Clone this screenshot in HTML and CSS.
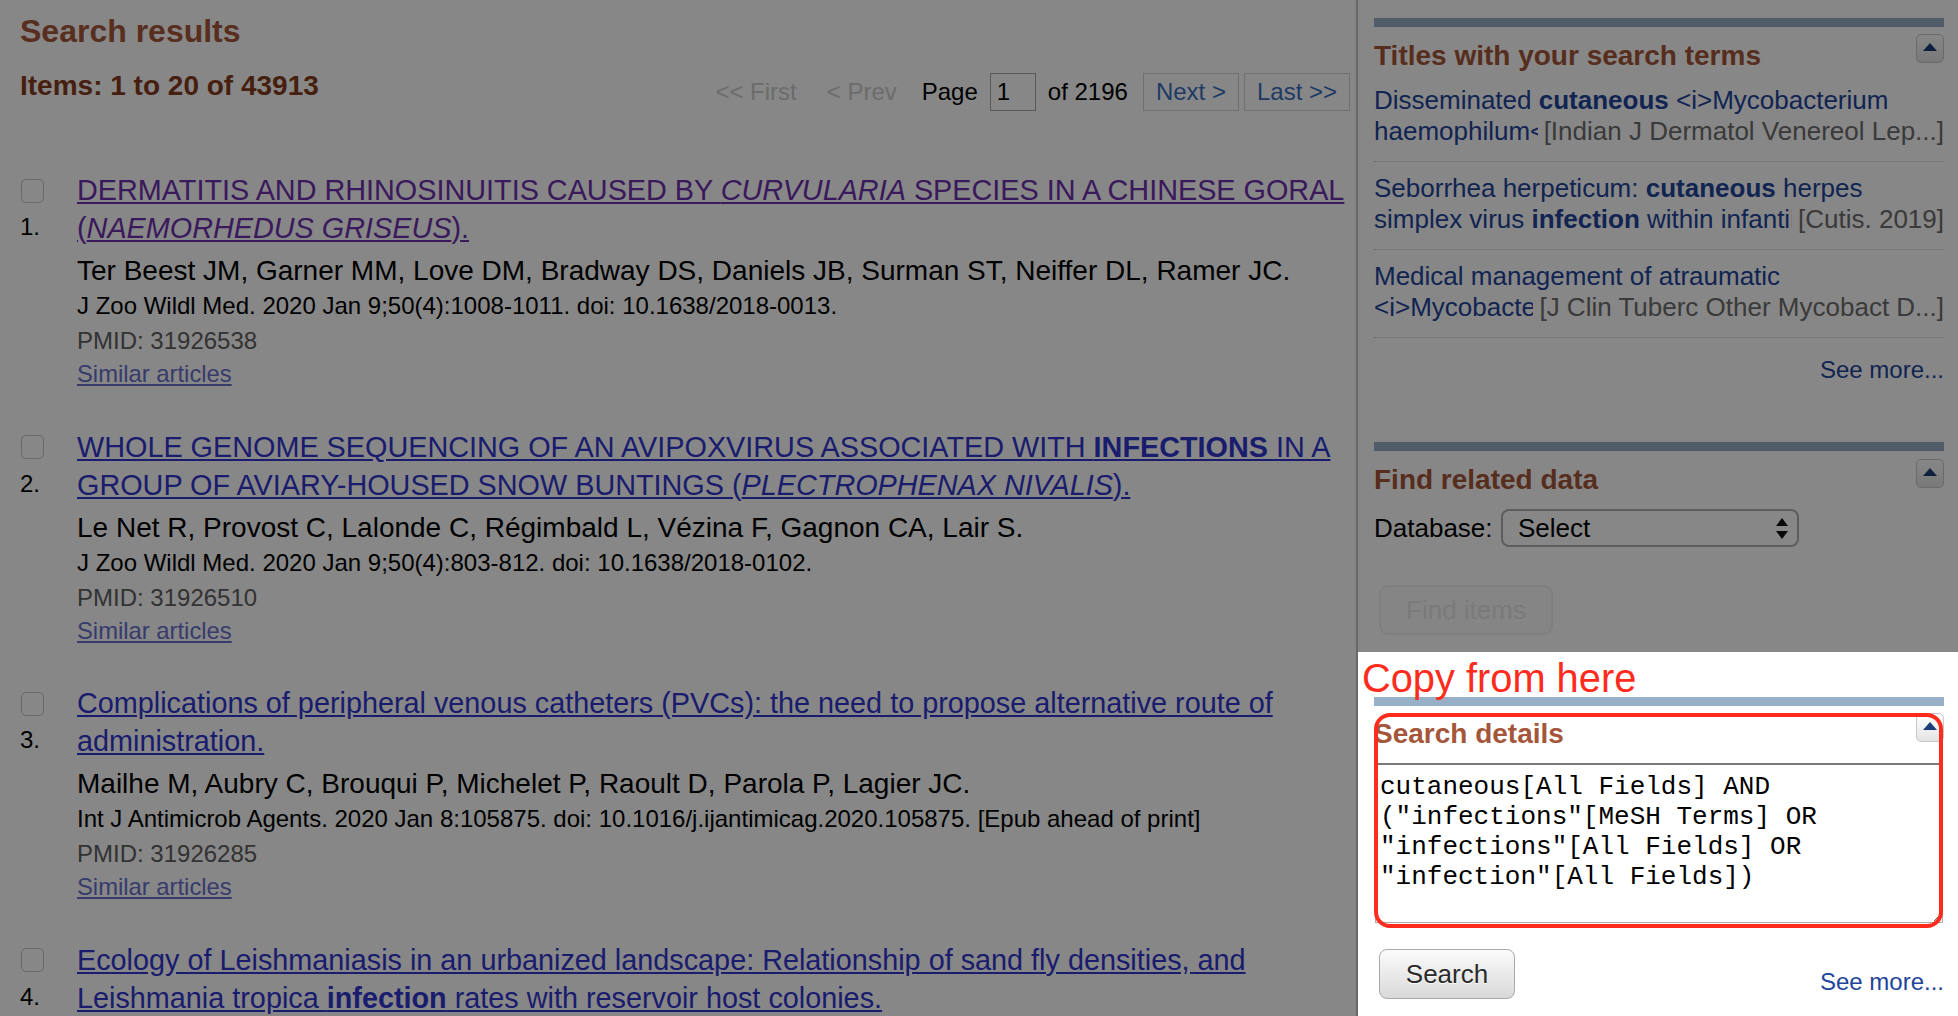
FILE: index.html
```html
<!DOCTYPE html>
<html lang="en">
<head>
<meta charset="utf-8">
<title>Search results</title>
<link rel="stylesheet" href="styles.css">
</head>
<body>
<div class="page">
  <main class="main">
    <h2 class="page-title">Search results</h2>
    <div class="title-bar">
      <h3 class="count">Items: 1 to 20 of 43913</h3>
      <div class="pager">
        <span class="pg-dis">&lt;&lt; First</span>
        <span class="pg-dis pg-prev">&lt; Prev</span>
        <span class="pg-page">Page</span>
        <span class="pg-input">1</span>
        <span class="pg-of">of 2196</span>
        <a class="pg-btn pg-next" href="#">Next &gt;</a>
        <a class="pg-btn pg-last" href="#">Last &gt;&gt;</a>
      </div>
    </div>

    <div class="results">
      <div class="rslt">
        <div class="rslt-side"><span class="chk"></span><span class="num">1.</span></div>
        <div class="rslt-body">
          <p class="rtitle"><a class="visited" href="#">DERMATITIS AND RHINOSINUITIS CAUSED BY <i>CURVULARIA</i> SPECIES IN A CHINESE GORAL (<i>NAEMORHEDUS GRISEUS</i>).</a></p>
          <p class="authors">Ter Beest JM, Garner MM, Love DM, Bradway DS, Daniels JB, Surman ST, Neiffer DL, Ramer JC.</p>
          <p class="journal">J Zoo Wildl Med. 2020 Jan 9;50(4):1008-1011. doi: 10.1638/2018-0013.</p>
          <p class="pmid">PMID: 31926538</p>
          <a class="similar" href="#">Similar articles</a>
        </div>
      </div>

      <div class="rslt">
        <div class="rslt-side"><span class="chk"></span><span class="num">2.</span></div>
        <div class="rslt-body">
          <p class="rtitle"><a href="#">WHOLE GENOME SEQUENCING OF AN AVIPOXVIRUS ASSOCIATED WITH <b>INFECTIONS</b> IN A GROUP OF AVIARY-HOUSED SNOW BUNTINGS (<i>PLECTROPHENAX NIVALIS</i>).</a></p>
          <p class="authors">Le Net R, Provost C, Lalonde C, Régimbald L, Vézina F, Gagnon CA, Lair S.</p>
          <p class="journal">J Zoo Wildl Med. 2020 Jan 9;50(4):803-812. doi: 10.1638/2018-0102.</p>
          <p class="pmid">PMID: 31926510</p>
          <a class="similar" href="#">Similar articles</a>
        </div>
      </div>

      <div class="rslt">
        <div class="rslt-side"><span class="chk"></span><span class="num">3.</span></div>
        <div class="rslt-body">
          <p class="rtitle"><a href="#">Complications of peripheral venous catheters (PVCs): the need to propose alternative route of administration.</a></p>
          <p class="authors">Mailhe M, Aubry C, Brouqui P, Michelet P, Raoult D, Parola P, Lagier JC.</p>
          <p class="journal">Int J Antimicrob Agents. 2020 Jan 8:105875. doi: 10.1016/j.ijantimicag.2020.105875. [Epub ahead of print]</p>
          <p class="pmid">PMID: 31926285</p>
          <a class="similar" href="#">Similar articles</a>
        </div>
      </div>

      <div class="rslt">
        <div class="rslt-side"><span class="chk"></span><span class="num">4.</span></div>
        <div class="rslt-body">
          <p class="rtitle"><a href="#">Ecology of Leishmaniasis in an urbanized landscape: Relationship of sand fly densities, and Leishmania tropica <b>infection</b> rates with reservoir host colonies.</a></p>
        </div>
      </div>
    </div>
  </main>

  <aside class="sidebar">
    <section class="portlet">
      <div class="portlet-bar"></div>
      <div class="portlet-head">
        <h3>Titles with your search terms</h3>
        <span class="toggle"></span>
      </div>
      <div class="tw-list">
        <div class="tw-item">
          <div class="tw-line1"><a href="#">Disseminated <b>cutaneous</b> &lt;i&gt;Mycobacterium</a></div>
          <div class="tw-line2"><a class="tw-clip" href="#">haemophilum&lt;/i&gt; infection in an immunocompetent host</a><span class="tw-src">[Indian J Dermatol Venereol Lep...]</span></div>
        </div>
        <div class="tw-item">
          <div class="tw-line1"><a href="#">Seborrhea herpeticum: <b>cutaneous</b> herpes</a></div>
          <div class="tw-line2"><a class="tw-clip" href="#">simplex virus <b>infection</b> within infantile seborrheic dermatitis.</a><span class="tw-src">[Cutis. 2019]</span></div>
        </div>
        <div class="tw-item">
          <div class="tw-line1"><a href="#">Medical management of atraumatic</a></div>
          <div class="tw-line2"><a class="tw-clip" href="#">&lt;i&gt;Mycobacterium abscessus&lt;/i&gt; infection</a><span class="tw-src">[J Clin Tuberc Other Mycobact D...]</span></div>
        </div>
      </div>
      <a class="see-more" href="#">See more...</a>
    </section>

    <section class="portlet portlet-related">
      <div class="portlet-bar"></div>
      <div class="portlet-head">
        <h3>Find related data</h3>
        <span class="toggle toggle-b"></span>
      </div>
      <div class="db-row">
        <span class="db-label">Database:</span>
        <span class="select">Select
          <svg class="select-arrows" width="12" height="21" viewBox="0 0 12 21"><path d="M6 0 L12 8 H0 Z M0 13 H12 L6 21 Z" fill="#111"/></svg>
        </span>
      </div>
      <span class="find-btn">Find items</span>
    </section>

    <div class="spotlight">
      <span class="annot-text">Copy from here</span>
      <section class="portlet portlet-details">
        <div class="portlet-bar"></div>
        <div class="portlet-head">
          <h3>Search details</h3>
          <span class="toggle toggle-c"></span>
        </div>
        <textarea class="query" readonly>cutaneous[All Fields] AND ("infections"[MeSH Terms] OR "infections"[All Fields] OR "infection"[All Fields])</textarea>
        <div class="details-foot">
          <span class="search-btn">Search</span>
          <a class="see-more see-more-b" href="#">See more...</a>
        </div>
      </section>
      <span class="annot-box"></span>
    </div>
  </aside>
</div>
</body>
</html>
```

FILE: styles.css
```css
* { box-sizing: border-box; }

html, body {
  margin: 0;
  height: 100%;
}

body {
  font-family: "Liberation Sans", Arial, Helvetica, sans-serif;
  background: #fff;
  color: #000;
  overflow: hidden;
}

a { text-decoration: none; }

.page {
  display: flex;
  width: 1958px;
  height: 1016px;
  overflow: hidden;
}

/* ---------- main column ---------- */
.main {
  width: 1356px;
  flex: none;
  padding: 11px 6px 0 20px;
}

.page-title {
  margin: 0;
  font-size: 32px;
  line-height: 40px;
  font-weight: bold;
  color: #a7573a;
}

.title-bar {
  display: flex;
  justify-content: space-between;
  margin-top: 22px;
  height: 38px;
}

.count {
  margin: -6px 0 0;
  font-size: 28px;
  line-height: 38px;
  font-weight: bold;
  color: #863c1c;
}

.pager {
  display: flex;
  align-items: center;
  font-size: 24px;
  height: 38px;
}

.pg-dis { color: #cccccc; }
.pg-prev { margin-left: 30px; }
.pg-page { margin-left: 25px; }

.pg-input {
  margin-left: 12px;
  width: 46px;
  height: 38px;
  border: 1px solid #a8a8a8;
  padding-left: 6px;
  line-height: 36px;
  background: #fff;
}

.pg-of { margin-left: 12px; }

.pg-btn {
  height: 38px;
  border: 1px solid #d4d4d4;
  padding: 0 12px;
  line-height: 36px;
  color: #3a6fbf;
  background: #fff;
}
.pg-next { margin-left: 15px; }
.pg-last { margin-left: 5px; }

.results { margin-top: 60px; }

.rslt {
  display: flex;
  margin-bottom: 37.5px;
}

.rslt-side {
  width: 57px;
  flex: none;
}

.chk {
  display: block;
  width: 23px;
  height: 24px;
  border: 1.5px solid #c6c6c6;
  border-radius: 5px;
  background: #fff;
  margin: 7.5px 0 0 1px;
}

.num {
  display: block;
  font-size: 24px;
  line-height: 30px;
  margin-top: 9.5px;
}

.rslt-body {
  flex: 1;
  min-width: 0;
}

.rtitle {
  margin: 0;
  font-size: 28.8px;
  line-height: 38px;
}

.rtitle a {
  color: #3136d0;
  text-decoration: underline;
}

.rtitle a.visited { color: #6e30ae; }

.authors {
  margin: 7px 0 0;
  font-size: 28px;
  line-height: 34px;
}

.journal {
  margin: 0;
  font-size: 24px;
  line-height: 35px;
}

.pmid {
  margin: 0;
  font-size: 24px;
  line-height: 35px;
  color: #606060;
}

.similar {
  display: inline-block;
  font-size: 23.8px;
  line-height: 32px;
  color: #6a70cc;
  text-decoration: underline;
}

/* ---------- sidebar ---------- */
.sidebar {
  flex: none;
  width: 602px;
  min-width: 0;
  border-left: 2px solid #c4c4c4;
  padding: 18px 14px 0 16px;
  display: flex;
  flex-direction: column;
}

.portlet-bar {
  height: 9px;
  background: #97afc7;
}

.portlet-head {
  display: flex;
  justify-content: space-between;
  align-items: flex-start;
  padding-top: 11px;
}

.portlet-head h3 {
  margin: 0;
  font-size: 28px;
  line-height: 36px;
  font-weight: bold;
  color: #a5563a;
}

.toggle {
  flex: none;
  width: 28px;
  height: 29px;
  margin-top: -4px;
  border: 1px solid #c9c9c9;
  border-radius: 5px;
  background: linear-gradient(#ffffff, #e4e4e4);
  display: flex;
  align-items: center;
  justify-content: center;
}

.toggle::before {
  content: "";
  border-left: 7px solid transparent;
  border-right: 7px solid transparent;
  border-bottom: 8px solid #1d3d78;
  margin-top: -4px;
}

.toggle-b { margin-top: -3px; }

.tw-item {
  padding: 11px 0 14px;
  border-bottom: 1px dotted #c8c8c8;
  font-size: 26px;
  line-height: 31px;
}

.tw-item a { color: #22449a; }

.tw-line1 {
  white-space: nowrap;
  overflow: hidden;
}

.tw-line2 { display: flex; }

.tw-clip {
  flex: 1;
  min-width: 0;
  overflow: hidden;
  white-space: nowrap;
}

.tw-src {
  flex: none;
  padding-left: 6px;
  color: #6e6e6e;
  white-space: nowrap;
}

.see-more {
  display: block;
  margin-top: 17px;
  text-align: right;
  font-size: 24px;
  line-height: 30px;
  color: #22449a;
}

.portlet-related { margin-top: 57px; }

.db-row {
  display: flex;
  align-items: center;
  margin-top: 11px;
  height: 38px;
  font-size: 26px;
}

.select {
  margin-left: 8.5px;
  width: 298px;
  height: 38px;
  border: 2px solid #b0b0b0;
  border-radius: 8px;
  background: #fff;
  padding: 0 9px 0 15px;
  display: flex;
  align-items: center;
  justify-content: space-between;
  line-height: 34px;
}

.select-arrows { display: block; }

.find-btn {
  display: block;
  width: 174px;
  height: 50px;
  margin: 38px 0 17px 5px;
  border: 2px solid #f0f0f0;
  border-radius: 9px;
  background: #fcfcfc;
  color: #e6e6e6;
  font-size: 26px;
  line-height: 46px;
  text-align: center;
}

/* ---------- highlighted area ---------- */
.spotlight {
  position: relative;
  z-index: 1;
  flex: 1;
  margin: 0 -14px 0 -16px;
  padding: 45px 14px 0 16px;
  background: #fff;
  box-shadow: 0 0 0 3000px rgba(0, 0, 0, 0.47);
}

.annot-text {
  position: absolute;
  top: 4px;
  left: 4px;
  z-index: 2;
  font-size: 39.8px;
  line-height: 44px;
  color: #ff2b1c;
  white-space: nowrap;
}

.annot-box {
  position: absolute;
  left: 15.5px;
  top: 61px;
  width: 569.5px;
  height: 215px;
  border: 4px solid #ff2b1c;
  border-radius: 16px;
  pointer-events: none;
}

.portlet-details .portlet-head { padding-top: 10px; }
.toggle-c { margin-top: -3px; }

.query {
  display: block;
  margin: 11px 0 0 1px;
  width: 568px;
  height: 160px;
  border: 1px solid #ababab;
  border-top: 2px solid #7a7a7a;
  padding: 7px 4px 3px;
  font-family: "Liberation Mono", "Courier New", monospace;
  font-size: 26px;
  line-height: 30px;
  color: #000;
  background: #fff;
  resize: both;
  overflow: hidden;
  outline: none;
}

.details-foot {
  display: flex;
  justify-content: space-between;
  align-items: flex-end;
  margin-top: 26px;
}

.search-btn {
  display: block;
  width: 136px;
  height: 50px;
  margin-left: 5px;
  border: 1px solid #a9a9a9;
  border-radius: 8px;
  background: linear-gradient(#fbfbfb, #d9d9d9);
  color: #2a2a2a;
  font-size: 26px;
  line-height: 48px;
  text-align: center;
  text-shadow: 0 1px 0 #fff;
}

.see-more-b {
  margin: 0 0 2px;
}
```
